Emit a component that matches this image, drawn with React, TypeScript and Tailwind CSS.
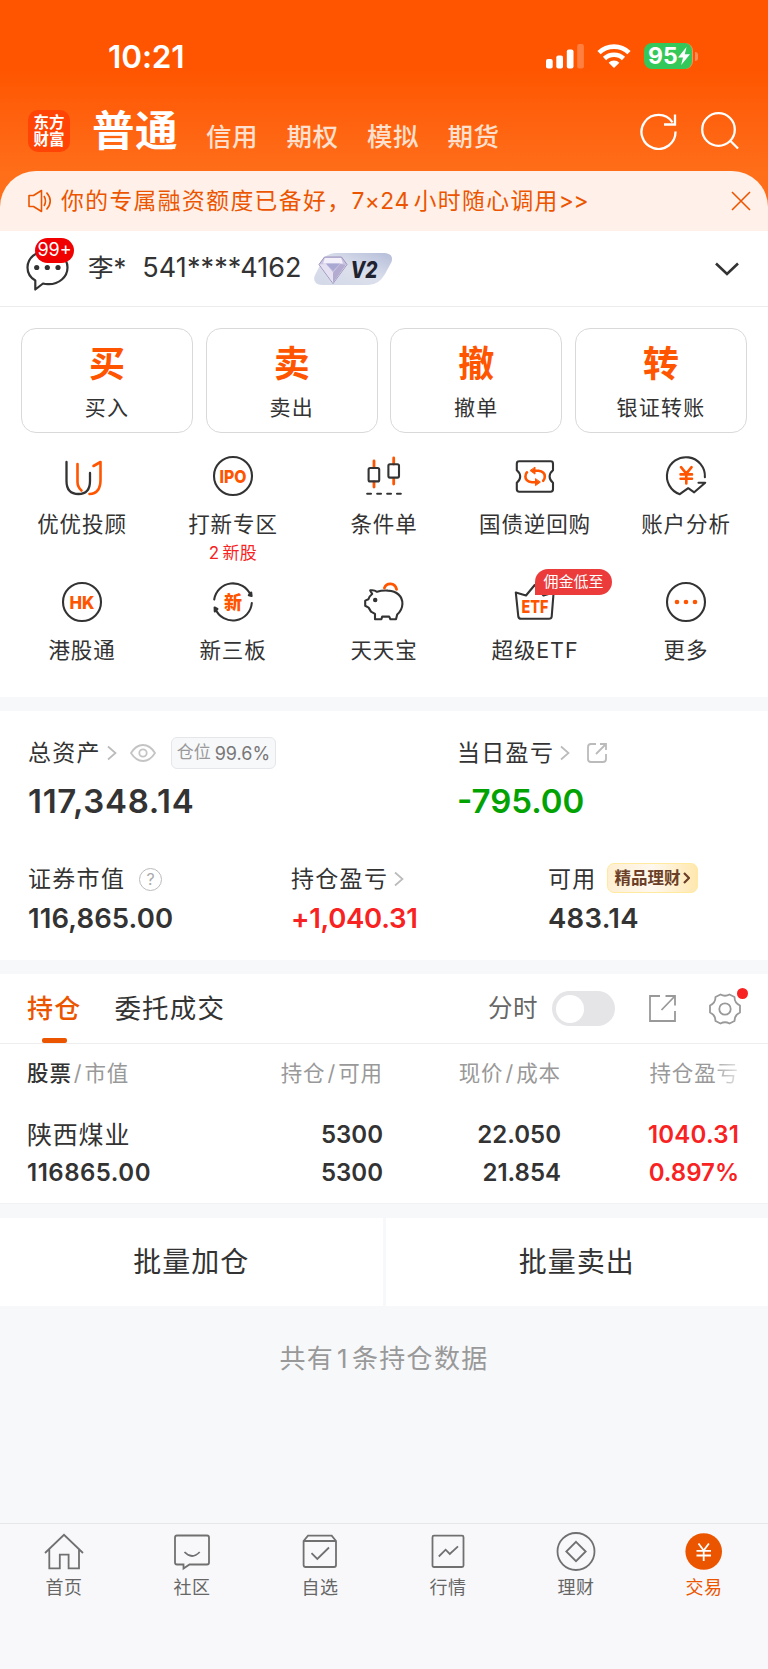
import {useState} from "react";
import type {ReactNode} from "react";

interface Accion {
  icono: string;
  nombre: string;
}

interface Servicio {
  nombre: string;
  icono: ReactNode;
  nota?: ReactNode;
  etiqueta?: string;
}

const Oscuro = "#333333";
const Naranja = "#ff5500";

const Mercados = ["信用", "期权", "模拟", "期货"];

const Acciones: Accion[] = [
  {icono: "买", nombre: "买入"},
  {icono: "卖", nombre: "卖出"},
  {icono: "撤", nombre: "撤单"},
  {icono: "转", nombre: "银证转账"},
];

function Icono({children}: {children: ReactNode}) {
  return (
    <svg
      className="h-10 w-10 overflow-visible"
      fill="none"
      stroke={Oscuro}
      strokeLinecap="round"
      strokeLinejoin="round"
      strokeWidth={2.1}
      viewBox="0 0 40 40"
    >
      {children}
    </svg>
  );
}

function Sigla({
  children,
  y,
  size,
  ancho,
}: {
  children: string;
  y: number;
  size: number;
  ancho: number;
}) {
  return (
    <text
      fill={Naranja}
      fontFamily="Inter, 'Noto Sans CJK SC', sans-serif"
      fontSize={size}
      fontWeight={800}
      lengthAdjust="spacingAndGlyphs"
      stroke="none"
      textLength={ancho}
      x={20 - ancho / 2}
      y={y}
    >
      {children}
    </text>
  );
}

const Servicios: Servicio[] = [
  {
    nombre: "优优投顾",
    icono: (
      <Icono>
        <path d="M4.5 6V25Q4.5 38 16.5 38Q28 38 28 25V17" strokeWidth={2.3} />
        <path
          d="M15.5 8V26Q15.5 31 19.5 34.5M31.5 10L38.5 6V24Q38.5 37.5 27.5 38"
          stroke={Naranja}
          strokeWidth={2.6}
        />
      </Icono>
    ),
  },
  {
    nombre: "打新专区",
    nota: (
      <>
        2<span className="ml-[3px]">新股</span>
      </>
    ),
    icono: (
      <Icono>
        <circle cx={20} cy={20} r={19} />
        <Sigla ancho={27} size={18} y={26.5}>
          IPO
        </Sigla>
      </Icono>
    ),
  },
  {
    nombre: "条件单",
    icono: (
      <Icono>
        <path d="M10 5V11M10 26V31M29.7 2V8M29.7 23V28" stroke={Naranja} strokeWidth={2.8} />
        <rect height={13.4} rx={1.5} width={10.6} x={4.6} y={12} />
        <rect height={13.4} rx={1.5} width={10.6} x={24.4} y={8.2} />
        <path d="M3.2 37.7H7M13.2 37.7H17M23.2 37.7H27M33 37.7H36.8" />
      </Icono>
    ),
  },
  {
    nombre: "国债逆回购",
    icono: (
      <Icono>
        <path d="M4.2 5.3H35.6Q38 5.3 38 7.7V14.2Q34.6 17 34.6 20.5T38 26.8V33.3Q38 35.7 35.6 35.7H4.2Q1.8 35.7 1.8 33.3V26.8Q5.2 24 5.2 20.5T1.8 14.2V7.7Q1.8 5.3 4.2 5.3Z" />
        <path
          d="M19 14.8H23.5Q29.8 15.5 29.8 20.5Q29.8 23.3 28.2 24.8M21.5 26.3H17Q10.4 25.5 10.4 20.5Q10.4 17.8 12 16.3"
          stroke={Naranja}
          strokeWidth={2.6}
        />
        <path
          d="M20 11.5V18.1L15.4 14.8ZM20.5 23V29.6L25.1 26.3Z"
          fill={Naranja}
          stroke={Naranja}
          strokeWidth={1}
        />
      </Icono>
    ),
  },
  {
    nombre: "账户分析",
    icono: (
      <Icono>
        <path d="M38.9 21.2A19 19 0 1 0 13.8 38.2L22.2 32.2L28.2 36.3L39.2 26.8H32.5" />
        <path
          d="M15 11.2L20.3 17.6L25.6 11.2M14.6 18.4H26M14.6 22.8H26M20.3 18V27.5"
          stroke={Naranja}
          strokeWidth={2.6}
        />
      </Icono>
    ),
  },
  {
    nombre: "港股通",
    icono: (
      <Icono>
        <circle cx={20} cy={20} r={19} />
        <Sigla ancho={25} size={18} y={26.5}>
          HK
        </Sigla>
      </Icono>
    ),
  },
  {
    nombre: "新三板",
    icono: (
      <Icono>
        <path d="M1.2 17.5A19 19 0 0 1 37.5 13M38.8 21A19 19 0 0 1 2.4 27" />
        <path d="M38.2 10.5L38.6 14L35.8 13.2ZM1.8 29.5L1.6 25.5L4.4 27Z" fill={Oscuro} />
        <Sigla ancho={18} size={18} y={26.6}>
          新
        </Sigla>
      </Icono>
    ),
  },
  {
    nombre: "天天宝",
    icono: (
      <Icono>
        <path d="M6.2 8.4Q10 7.6 13 9.8Q18 8.2 24 8.6C33 9 38.6 14.5 38.4 22Q38.2 28 33.2 32.5L32 37.2H26.4L25.2 34.6H18.2L17.4 37.2H11V31.8L7 29.6L4.6 25.6L1.2 23.8V18.6L4.4 17.3Q5.4 14 8.2 12Z" />
        <circle cx={11.2} cy={18} fill={Oscuro} r={1.2} />
        <path d="M20.4 6C22.5 .6 30.8 .2 32.6 7.4" stroke={Naranja} strokeWidth={2.8} />
      </Icono>
    ),
  },
  {
    nombre: "超级ETF",
    etiqueta: "佣金低至",
    icono: (
      <Icono>
        <path d="M.8 10.5L11 13.5L19.7 3L28.5 13.5L38.6 10.5L36.7 34.5Q36.5 36.7 34 36.7H6Q3.6 36.7 3.3 34.5Z" />
        <Sigla ancho={27} size={18} y={30.5}>
          ETF
        </Sigla>
      </Icono>
    ),
  },
  {
    nombre: "更多",
    icono: (
      <Icono>
        <circle cx={20} cy={20} r={19} />
        <g fill={Naranja} stroke="none">
          <circle cx={11} cy={20} r={2.3} />
          <circle cx={20} cy={20} r={2.3} />
          <circle cx={29} cy={20} r={2.3} />
        </g>
      </Icono>
    ),
  },
];

const Navegacion: {nombre: string; icono: ReactNode}[] = [
  {
    nombre: "首页",
    icono: <path d="M1 20L20 1.8L39 20M5.3 16V35.3H15.8V21.7H24.6V35.3H35V16" />,
  },
  {
    nombre: "社区",
    icono: (
      <path d="M5 2.5H35Q37 2.5 37 4.5V29.5Q37 31.5 35 31.5H17.5L11.5 35.5V31.5H5Q3 31.5 3 29.5V4.5Q3 2.5 5 2.5ZM12.5 19Q20 27 27.7 19" />
    ),
  },
  {
    nombre: "自选",
    icono: (
      <path d="M3.6 8L8 2.7H31.7L36 8V32Q36 34 34 34H5.6Q3.6 34 3.6 32ZM3.6 8H36M11.5 20.2L17.3 26L29 14.5" />
    ),
  },
  {
    nombre: "行情",
    icono: (
      <path d="M6 2.7H34Q35.5 2.7 35.5 4.2V32.5Q35.5 34 34 34H6Q4.5 34 4.5 32.5V4.2Q4.5 2.7 6 2.7ZM10.8 23.5L17.6 16.7L21.8 21L30 13.3" />
    ),
  },
  {
    nombre: "理财",
    icono: (
      <>
        <circle cx={20} cy={18.5} r={18.5} />
        <path d="M20 8.8L29.7 18.5L20 28.2L10.3 18.5Z" />
      </>
    ),
  },
  {
    nombre: "交易",
    icono: (
      <>
        <circle cx={19.7} cy={18.5} fill="#ec5500" r={18.3} stroke="none" />
        <path
          d="M14.5 10.5L19.7 17.5L24.9 10.5M12.5 17.8H27M12.5 22.5H27M19.7 17.5V28"
          stroke="#fff"
        />
      </>
    ),
  },
];

function Flecha() {
  return (
    <svg className="h-4 w-[10px]" fill="none" stroke="#bbbbbb" strokeWidth={1.7} viewBox="0 0 10 16">
      <path d="M1 1.5L8.5 8L1 14.5" />
    </svg>
  );
}

function BarraEstado() {
  return (
    <div className="flex h-[100px] items-start justify-between pt-[43px] pr-[70px] pl-[108px] text-white">
      <span className="text-[31.5px] leading-7 font-semibold tracking-[-0.1px]">10:21</span>
      <div className="flex items-center">
        <svg className="h-[26px] w-[38px]" fill="#fff" viewBox="0 0 38 26">
          <rect height={9.5} rx={2} width={6.7} y={16} />
          <rect height={13} rx={2} width={6.7} x={10.3} y={12.5} />
          <rect height={19} rx={2} width={6.7} x={20.8} y={6.5} />
          <rect height={24.5} opacity={0.25} rx={2} width={6.7} x={31.2} y={1} />
        </svg>
        <svg className="ml-[13px] h-[26px] w-[34px]" viewBox="0 0 34 26">
          <g fill="none" stroke="#fff" strokeWidth={4.6}>
            <path d="M2 9.7A21.5 21.5 0 0 1 32 9.7" />
            <path d="M7.5 15.5A13.8 13.8 0 0 1 26.5 15.5" />
          </g>
          <path d="M17 25L11.6 19.7A7.6 7.6 0 0 1 22.4 19.7Z" fill="#fff" />
        </svg>
        <div className="ml-[13px] flex h-[26px] w-[49px] items-center rounded-[8px] border-r-[1.5px] border-[#ff8f58] bg-[#34c759] pl-[4px]">
          <span className="text-[23px] leading-[26px] font-bold">95</span>
          <svg className="h-[18px] w-3" fill="#fff" viewBox="0 0 12 18">
            <path d="M8.5 0L0 10.5H5L3.2 18L12 7.3H6.8Z" />
          </svg>
        </div>
        <div className="ml-[2px] h-[9px] w-[3px] rounded-r-full bg-[#ff8f58]" />
      </div>
    </div>
  );
}

function Cabecera() {
  return (
    <div className="flex h-[71px] items-start pl-7 text-white">
      <div className="mt-[10px] flex h-[42px] w-[42px] flex-col items-center justify-center rounded-[10px] bg-[#ff4405] text-[15.5px] leading-[17px] font-bold">
        <span>东方</span>
        <span>财富</span>
      </div>
      <h1 className="ml-[22px] text-[42.5px] leading-[62px] font-bold tracking-[0.5px]">普通</h1>
      <div className="ml-[28px] flex gap-[28.3px] pt-[21px] text-[25.5px] leading-8 font-medium tracking-[0.6px] text-[#ffe0cf]">
        {Mercados.map((mercado) => (
          <span key={mercado}>{mercado}</span>
        ))}
      </div>
      <svg
        className="mt-[12px] ml-auto h-[38px] w-[38px]"
        fill="none"
        stroke="#fff"
        strokeWidth={2.3}
        viewBox="0 0 38 38"
      >
        <path d="M35.5 19.5A17 17 0 1 1 32.5 10.3" />
        <path d="M35 2.5V12.5H24" />
      </svg>
      <svg
        className="mt-[11px] mr-[28px] ml-[22px] h-[40px] w-[40px]"
        fill="none"
        stroke="#fff"
        strokeWidth={2.3}
        viewBox="0 0 40 40"
      >
        <circle cx={18.5} cy={18.5} r={16.3} />
        <path d="M30 29.5L38 37.5" />
      </svg>
    </div>
  );
}

function Aviso() {
  return (
    <div className="flex h-[60px] items-center rounded-t-[36px] bg-[#fff1ea] pr-[17px] pl-7 text-[#ec5500]">
      <svg
        className="h-6 w-[24px]"
        fill="none"
        stroke="#ec5500"
        strokeLinejoin="round"
        strokeWidth={1.6}
        viewBox="0 0 24 24"
      >
        <path d="M1 6.5H5.5L13.5 1.5V22.5L5.5 17.5H1Z" />
        <path d="M16 7Q19 12 16 17M18.5 3.5Q26 12 18.5 20.5" />
      </svg>
      <span className="ml-[9px] text-[22.8px] leading-8 tracking-[1.4px] whitespace-nowrap">
        你的专属融资额度已备好，<span className="tracking-[0.5px]">7×24</span>
        <span className="ml-1">小时随心调用</span>
        <span className="tracking-[-0.5px]">&gt;&gt;</span>
      </span>
      <svg className="ml-auto h-5 w-5" stroke="#ec5500" strokeWidth={1.6} viewBox="0 0 20 20">
        <path d="M1 1L19 19M19 1L1 19" />
      </svg>
    </div>
  );
}

function Cuenta() {
  return (
    <div className="flex h-[76px] items-center border-b border-[#ededed] bg-white pr-[29px] pl-[26px] text-[#333]">
      <div className="relative mt-[2px] h-[42px] w-[44px]">
        <svg
          className="h-[42px] w-[44px]"
          fill="none"
          stroke="#333"
          strokeLinejoin="round"
          strokeWidth={2.2}
          viewBox="0 0 44 42"
        >
          <path d="M9.3 31.5Q1.5 27 1.5 18.5C1.5 9 10 2 21.5 2S41.5 9 41.5 18.5S33 35.5 22 35.2Q19 35.2 17 34.5L9.3 40.5Z" />
          <g fill="#333" stroke="none">
            <circle cx={10.7} cy={18.5} r={2.6} />
            <circle cx={21.3} cy={18.5} r={2.6} />
            <circle cx={32} cy={18.5} r={2.6} />
          </g>
        </svg>
        <span className="absolute top-[-11px] left-[9px] flex h-[25px] w-[39px] items-center justify-center rounded-full bg-[#f00000] text-[18px] leading-none text-white">
          99+
        </span>
      </div>
      <span className="ml-[18px] text-[25.5px]">李*</span>
      <span className="ml-[16px] text-[27px] tracking-[0.1px]">541****4162</span>
      <svg className="ml-[12px] h-8 w-[78px]" viewBox="0 0 78 32">
        <defs>
          <linearGradient id="insignia" x1="0" x2="1" y1="1" y2="0">
            <stop offset="0" stopColor="#d3d8e8" />
            <stop offset="0.5" stopColor="#dce0ec" />
            <stop offset="1" stopColor="#b4bdd9" />
          </linearGradient>
        </defs>
        <path
          d="M22 0H70Q80 .5 77.5 9L71 21Q65 32 54 32H8Q-1.5 31.5 .6 23L7 10Q12 0 22 0Z"
          fill="url(#insignia)"
        />
        <path d="M10.5 4H27.5L33 11.5L19 30.5L5 11.5Z" fill="#cbc5e2" stroke="#9c94bd" />
        <path d="M11 5H27L29 10.5H9Z" fill="#f4f0fa" />
        <path d="M5.5 11.5L12 11L19 19.5L26 11L32.5 11.5L19 30Z" fill="#e6e1f2" />
        <path d="M12 10.5H26L19 18Z" fill="#a9a8d3" />
        <path d="M19 19.5L26 11L32 11.5L19 30Z" fill="#b4acd0" />
        <text
          fill="#20232f"
          fontFamily="Inter, sans-serif"
          fontSize={23}
          fontStyle="italic"
          fontWeight={800}
          lengthAdjust="spacingAndGlyphs"
          textLength={27}
          x={36.5}
          y={24.5}
        >
          V2
        </text>
      </svg>
      <svg className="ml-auto h-4 w-[24px]" fill="none" stroke="#333" strokeWidth={2.6} viewBox="0 0 24 16">
        <path d="M1 2.5L12 13L23 2.5" />
      </svg>
    </div>
  );
}

function PanelAcciones() {
  return (
    <section className="h-[390px] bg-white pt-[21px] text-[#333]">
      <div className="grid grid-cols-4 gap-x-[12.5px] px-[21px]">
        {Acciones.map((accion) => (
          <button
            key={accion.nombre}
            className="flex h-[105px] flex-col items-center rounded-[15px] border border-[#d9d9d9] pt-[14px]"
            type="button"
          >
            <span className="text-[36px] leading-[42px] font-bold text-[#ff5500]">{accion.icono}</span>
            <span className="mt-[8px] text-[21px] leading-[30px] tracking-[1.2px]">{accion.nombre}</span>
          </button>
        ))}
      </div>
      <div className="mt-[23px] grid grid-cols-5 px-[6.5px]">
        {Servicios.map((servicio) => (
          <div key={servicio.nombre} className="relative flex h-[126px] flex-col items-center">
            {servicio.icono}
            <span className="mt-[13px] text-[21.5px] leading-[30px] tracking-[0.9px] whitespace-nowrap">
              {servicio.nombre}
            </span>
            {servicio.nota && (
              <span className="mt-[4px] text-[17px] leading-5 tracking-[0.3px] text-[#f82222]">
                {servicio.nota}
              </span>
            )}
            {servicio.etiqueta && (
              <span className="absolute top-[-13px] left-1/2 flex h-[26px] w-[77px] items-center justify-center rounded-full rounded-bl-none bg-[#eb3b3b] text-[15px] whitespace-nowrap text-white">
                {servicio.etiqueta}
              </span>
            )}
          </div>
        ))}
      </div>
    </section>
  );
}

function Resumen() {
  return (
    <section className="mt-[14px] h-[249px] bg-white px-7 pt-[26px] text-[#333]">
      <div className="grid grid-cols-[429px_1fr]">
        <div>
          <div className="flex h-8 items-center">
            <span className="text-[23px] tracking-[1.3px]">总资产</span>
            <span className="ml-[6px]">
              <Flecha />
            </span>
            <svg
              className="ml-[13px] h-[18px] w-[26px]"
              fill="none"
              stroke="#c4c4c4"
              strokeWidth={1.8}
              viewBox="0 0 26 18"
            >
              <path d="M1 9Q6 1 13 1T25 9Q20 17 13 17T1 9Z" />
              <circle cx={13} cy={9} r={3.7} />
            </svg>
            <span className="ml-[15px] flex h-8 w-[105px] items-center justify-center rounded-[6px] border border-[#e5e6ea] bg-[#f7f8fa] text-[17px] whitespace-nowrap text-[#999]">
              仓位<span className="ml-[4px] text-[18px] text-[#777]">99.6%</span>
            </span>
          </div>
          <p className="mt-[12px] text-[33px] leading-10 font-semibold tracking-[0.7px]">117,348.14</p>
        </div>
        <div>
          <div className="flex h-8 items-center">
            <span className="text-[23px] tracking-[1.3px]">当日盈亏</span>
            <span className="ml-[6px]">
              <Flecha />
            </span>
            <svg
              className="ml-[17px] h-5 w-5"
              fill="none"
              stroke="#bbbbbb"
              strokeWidth={1.8}
              viewBox="0 0 20 20"
            >
              <path d="M9 1H4Q1 1 1 4V16Q1 19 4 19H16Q19 19 19 16V11M9 11L19 1M13 1H19V7" />
            </svg>
          </div>
          <p className="mt-[12px] text-[33px] leading-10 font-semibold text-[#02a202]">-795.00</p>
        </div>
      </div>
      <div className="mt-[42px] grid grid-cols-[263px_257px_1fr]">
        <div>
          <div className="flex h-8 items-center">
            <span className="text-[23px] tracking-[1.3px]">证券市值</span>
            <span className="ml-[14px] flex h-[23px] w-[23px] items-center justify-center rounded-full border-[1.5px] border-[#bbb] text-[16px] leading-none text-[#aaa]">
              ?
            </span>
          </div>
          <p className="mt-[7px] text-[27.5px] leading-8 font-semibold tracking-[0.1px]">116,865.00</p>
        </div>
        <div>
          <div className="flex h-8 items-center">
            <span className="text-[23px] tracking-[1.3px]">持仓盈亏</span>
            <span className="ml-[6px]">
              <Flecha />
            </span>
          </div>
          <p className="mt-[7px] text-[27.5px] leading-8 font-semibold tracking-[-0.3px] text-[#f82222]">
            +1,040.31
          </p>
        </div>
        <div>
          <div className="flex h-8 items-center">
            <span className="text-[23px] tracking-[1.3px]">可用</span>
            <span className="mt-[-2px] ml-[10px] flex h-[30px] w-[91px] items-center justify-center gap-[2px] rounded-[7px] border border-[#ffeaa0] bg-linear-to-r from-[#ffefd2] via-[#fff8ee] to-[#ffe7ae] text-[16.5px] font-bold whitespace-nowrap text-[#6b3f27]">
              精品理财
              <svg className="h-3 w-[7px]" fill="none" stroke="#6b3f27" strokeWidth={2.2} viewBox="0 0 7 12">
                <path d="M1 1L6 6L1 11" />
              </svg>
            </span>
          </div>
          <p className="mt-[7px] text-[27.5px] leading-8 font-semibold tracking-[0.3px]">483.14</p>
        </div>
      </div>
    </section>
  );
}

function Posiciones() {
  const [intradia, setIntradia] = useState(false);

  return (
    <section className="mt-[14px] h-[230px] border-b border-[#f0f1f3] bg-white text-[#333]">
      <div className="flex h-[70px] items-center border-b border-[#eeeeee] pr-[27px] pl-[27px]">
        <div className="relative flex h-full items-center text-[26px] font-medium tracking-[1.2px] text-[#ec5500]">
          持仓
          <span className="absolute bottom-0 left-[15px] h-[5px] w-[25px] rounded-[2px] bg-[#ec5500]" />
        </div>
        <span className="ml-[33px] text-[26.5px] tracking-[1.2px]">委托成交</span>
        <span className="ml-auto text-[24.5px] tracking-[0.5px] text-[#666]">分时</span>
        <button
          className="ml-[14px] flex h-[35px] w-[63px] items-center rounded-full bg-[#e5e5e8] px-[3.5px]"
          type="button"
          onClick={() => setIntradia(!intradia)}
        >
          <span className={`h-7 w-7 rounded-full bg-white ${intradia ? "ml-auto" : ""}`} />
        </button>
        <svg
          className="ml-[34px] h-[27px] w-[27px]"
          fill="none"
          stroke="#999"
          strokeWidth={1.8}
          viewBox="0 0 27 27"
        >
          <path d="M11 1H1V26H26V16M12.5 15L25.5 1.5M16.5 1H26V10.5" />
        </svg>
        <div className="relative ml-[33px] h-8 w-8">
          <svg
            className="h-8 w-8"
            fill="none"
            stroke="#999"
            strokeLinejoin="round"
            strokeWidth={1.8}
            viewBox="0 0 32 32"
          >
            <path d="M11.5 1.5Q16 4 20.5 1.5L25.5 4Q25.5 10 31 12.5V19.5Q25.500 22 25.500 28L20.500 30.500Q16 28 11.500 30.500L6.500 28Q6.500 22 1 19.500V12.500Q6.500 10 6.500 4Z" />
            <circle cx={16} cy={16} r={5.7} />
          </svg>
          <span className="absolute top-[-5px] right-[-7px] h-[11px] w-[11px] rounded-full bg-[#f82222]" />
        </div>
      </div>
      <div className="grid grid-cols-[178px_178px_178px_178px] pt-[13px] pl-[27px] text-right text-[21.5px] leading-8 tracking-[0.9px] text-[#999]">
        <span className="text-left">
          <span className="font-medium text-[#333]">股票</span>
          <span className="mx-[2px]">/</span>市值
        </span>
        <span>
          持仓<span className="mx-[2px]">/</span>可用
        </span>
        <span>
          现价<span className="mx-[2px]">/</span>成本
        </span>
        <span>
          持仓盈
          <span className="bg-linear-to-r from-[#aaa] to-[#e5e5e5] bg-clip-text text-transparent">亏</span>
        </span>
      </div>
      <div className="mt-[27px] grid grid-cols-[178px_178px_178px_178px] pl-[27px] text-right text-[24px] leading-[38px] font-semibold">
        <span className="text-left text-[25px] font-normal tracking-[0.8px]">陕西煤业</span>
        <span>5300</span>
        <span>22.050</span>
        <span className="tracking-[0.2px] text-[#f82222]">1040.31</span>
        <span className="text-left tracking-[0.5px]">116865.00</span>
        <span>5300</span>
        <span>21.854</span>
        <span className="text-[#f82222]">0.897%</span>
      </div>
    </section>
  );
}

export default function App() {
  return (
    <div className="flex h-[1669px] w-[768px] flex-col overflow-hidden bg-[#f7f8fa] font-[Inter,'Noto_Sans_CJK_SC',sans-serif]">
      <div className="bg-linear-to-b from-[#ff5500] from-30% to-[#ff6e19] to-75%">
        <BarraEstado />
        <Cabecera />
        <Aviso />
      </div>
      <Cuenta />
      <PanelAcciones />
      <Resumen />
      <Posiciones />
      <div className="mt-[14px] grid grid-cols-2 gap-x-[3px] text-center text-[28px] leading-[88px] tracking-[1px] text-[#333]">
        <button className="bg-white" type="button">
          批量加仓
        </button>
        <button className="bg-white" type="button">
          批量卖出
        </button>
      </div>
      <p className="mt-[33px] text-center text-[26px] leading-10 tracking-[1.3px] text-[#999]">
        共有<span className="mx-[3px]">1</span>条持仓数据
      </p>
      <nav className="mt-auto grid h-[146px] grid-cols-6 border-t border-[#e6e7ea] bg-[#f8f8fb] pt-[9px] text-[#666]">
        {Navegacion.map((item) => (
          <div
            key={item.nombre}
            className="flex flex-col items-center text-[18px] tracking-[0.5px] last:text-[#ec5500]"
          >
            <svg
              className="h-[37px] w-10 overflow-visible"
              fill="none"
              stroke="#707070"
              strokeWidth={1.8}
              viewBox="0 0 40 37"
            >
              {item.icono}
            </svg>
            <span className="mt-[6px] leading-6">{item.nombre}</span>
          </div>
        ))}
      </nav>
    </div>
  );
}
